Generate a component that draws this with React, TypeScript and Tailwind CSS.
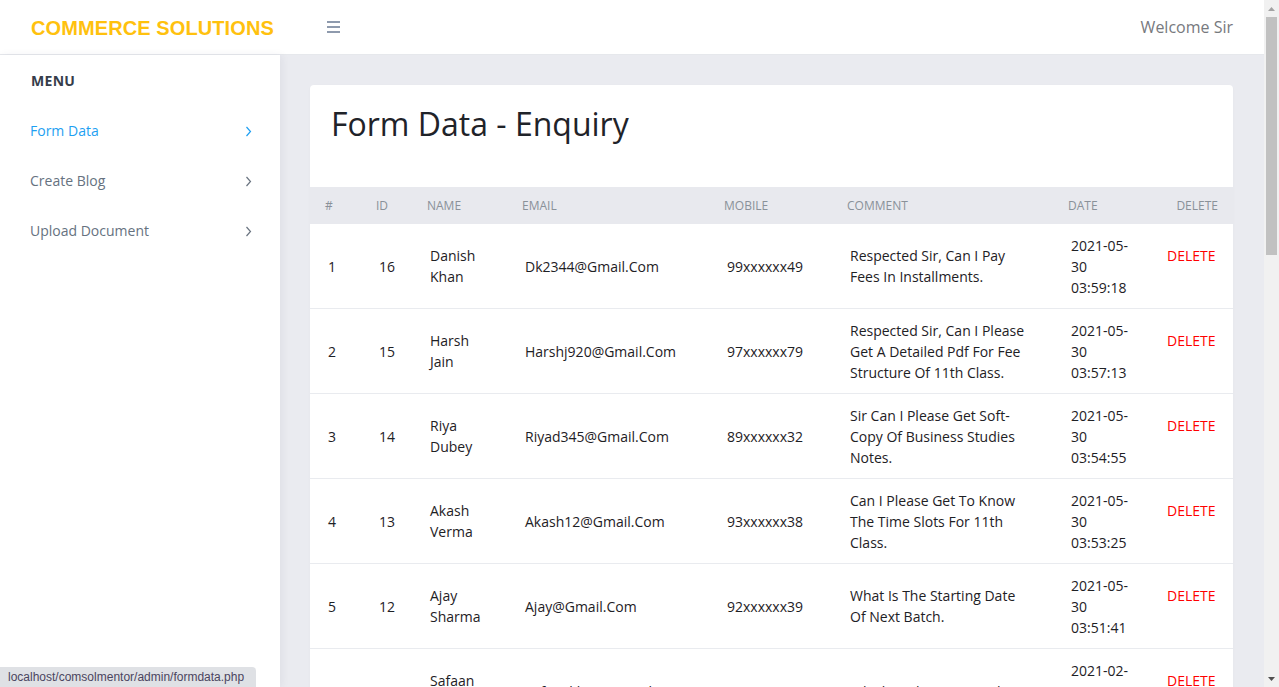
import React from "react";

type Enquiry = {
  id: number;
  name: string[];
  email: string;
  mobile: string;
  comment: string[];
  date: string[];
};

const rows: Enquiry[] = [
  {
    id: 16,
    name: ["Danish", "Khan"],
    email: "Dk2344@Gmail.Com",
    mobile: "99xxxxxx49",
    comment: ["Respected Sir, Can I Pay", "Fees In Installments."],
    date: ["2021-05-", "30", "03:59:18"],
  },
  {
    id: 15,
    name: ["Harsh", "Jain"],
    email: "Harshj920@Gmail.Com",
    mobile: "97xxxxxx79",
    comment: ["Respected Sir, Can I Please", "Get A Detailed Pdf For Fee", "Structure Of 11th Class."],
    date: ["2021-05-", "30", "03:57:13"],
  },
  {
    id: 14,
    name: ["Riya", "Dubey"],
    email: "Riyad345@Gmail.Com",
    mobile: "89xxxxxx32",
    comment: ["Sir Can I Please Get Soft-", "Copy Of Business Studies", "Notes."],
    date: ["2021-05-", "30", "03:54:55"],
  },
  {
    id: 13,
    name: ["Akash", "Verma"],
    email: "Akash12@Gmail.Com",
    mobile: "93xxxxxx38",
    comment: ["Can I Please Get To Know", "The Time Slots For 11th", "Class."],
    date: ["2021-05-", "30", "03:53:25"],
  },
  {
    id: 12,
    name: ["Ajay", "Sharma"],
    email: "Ajay@Gmail.Com",
    mobile: "92xxxxxx39",
    comment: ["What Is The Starting Date", "Of Next Batch."],
    date: ["2021-05-", "30", "03:51:41"],
  },
  {
    id: 11,
    name: ["Safaan", "Khan"],
    email: "Safaankhan@Gmail.Com",
    mobile: "98xxxxxx21",
    comment: ["Which Is The Fee Details."],
    date: ["2021-02-", "14", "11:20:36"],
  },
];

const cols = "grid grid-cols-[51px_51px_95px_202px_123px_221px_96px_1fr] pl-[6px]";

const Chevron = ({ color }: { color: string }) => (
  <svg width="7" height="11" viewBox="0 0 7 11" fill="none" stroke={color} strokeWidth="1.2">
    <polyline points="1.5,1 5.5,5.5 1.5,10" />
  </svg>
);

const Lines = ({ lines }: { lines: string[] }) => (
  <div>
    {lines.map((l, i) => (
      <div key={i}>{l}</div>
    ))}
  </div>
);

export default function App() {
  const menu = [
    { label: "Form Data", active: true },
    { label: "Create Blog", active: false },
    { label: "Upload Document", active: false },
  ];

  return (
    <div
      className="h-[687px] w-full flex overflow-hidden bg-white"
      style={{ fontFamily: '"Open Sans", sans-serif' }}
    >
      <div className="flex-1 min-w-0 flex flex-col relative">
        {/* top bar */}
        <header className="h-[55px] shrink-0 flex items-center border-b border-[#e6e8ec] bg-white">
          <div className="w-[280px] pl-[31px] pt-[1px]">
            <span
              className="text-[20px] font-bold text-[#ffc10e] tracking-[0.1px]"
              style={{ fontFamily: '"Liberation Sans", Arial, sans-serif' }}
            >
              COMMERCE SOLUTIONS
            </span>
          </div>
          <div className="flex flex-col gap-[3px] ml-[47px]">
            <span className="block w-[13px] h-[2px] bg-[#8e9aad]" />
            <span className="block w-[13px] h-[2px] bg-[#8e9aad]" />
            <span className="block w-[13px] h-[2px] bg-[#8e9aad]" />
          </div>
          <div className="ml-auto pr-[31px] text-[16px] text-[#77797e]">Welcome Sir</div>
        </header>

        <div className="flex-1 min-h-0 flex">
          {/* sidebar */}
          <aside className="w-[280px] shrink-0 bg-white shadow-[2px_0_8px_rgba(30,40,70,0.06)] z-10">
            <div className="pl-[31px] pt-[15px] h-[50px] text-[14px] font-bold text-[#363d4a] tracking-[0.3px]">
              MENU
            </div>
            {menu.map((m) => (
              <div
                key={m.label}
                className={`h-[50px] flex items-center pl-[30px] pr-[28px] text-[14px] ${
                  m.active ? "text-[#1e9ff2]" : "text-[#66727f]"
                }`}
              >
                <span className="flex-1">{m.label}</span>
                <span className="mt-[3px]">
                  <Chevron color={m.active ? "#1e9ff2" : "#6a7480"} />
                </span>
              </div>
            ))}
          </aside>

          {/* main */}
          <main className="flex-1 min-w-0 bg-[#eaebf0] pt-[30px] pl-[30px] pr-[31px]">
            <div className="bg-white rounded-[4px] shadow-[0_1px_3px_rgba(0,0,0,0.03)] overflow-hidden">
              <div className="h-[102px] pl-[21px] pt-[19px]">
                <h1 className="text-[32px] leading-[40px] text-[#1f2329]">Form Data - Enquiry</h1>
              </div>

              <div className={`${cols} h-[37px] items-center bg-[#e8e9ee] text-[12px] text-[#8a9199]`}>
                <div className="pl-[9px]">#</div>
                <div className="pl-[9px]">ID</div>
                <div className="pl-[9px]">NAME</div>
                <div className="pl-[9px]">EMAIL</div>
                <div className="pl-[9px]">MOBILE</div>
                <div className="pl-[9px]">COMMENT</div>
                <div className="pl-[9px]">DATE</div>
                <div className="text-right pr-[15px]">DELETE</div>
              </div>

              {rows.map((r, i) => (
                <div
                  key={r.id}
                  className={`${cols} h-[85px] items-center border-b border-[#e9ebef] text-[14px] leading-[21px] text-[#1e2125]`}
                >
                  <div className="pl-3">{i + 1}</div>
                  <div className="pl-3">{r.id}</div>
                  <div className="pl-3">
                    <Lines lines={r.name} />
                  </div>
                  <div className="pl-3">{r.email}</div>
                  <div className="pl-3">{r.mobile}</div>
                  <div className="pl-3">
                    <Lines lines={r.comment} />
                  </div>
                  <div className="pl-3">
                    <Lines lines={r.date} />
                  </div>
                  <div className="pl-3 pb-[21px]">
                    <a href="#" className="text-[#ff0000]">
                      DELETE
                    </a>
                  </div>
                </div>
              ))}
            </div>
          </main>
        </div>

        {/* browser status bubble */}
        <div
          className="absolute z-20 bottom-0 left-0 h-[20px] w-[256px] bg-[#dfe1e5] rounded-tr-[4px] pl-[8px] flex items-center text-[12px] text-[#4b4560]"
          style={{ fontFamily: '"Liberation Sans", Arial, sans-serif' }}
        >
          localhost/comsolmentor/admin/formdata.php
        </div>
      </div>

      {/* page scrollbar */}
      <div className="w-[15px] shrink-0 bg-[#f1f1f1] flex flex-col items-center">
        <div className="h-[17px] flex items-center justify-center">
          <svg width="7" height="4" viewBox="0 0 7 4">
            <polygon points="0,4 3.5,0 7,4" fill="#a3a3a3" />
          </svg>
        </div>
        <div className="w-[11px] h-[238px] bg-[#c1c1c1]" />
        <div className="flex-1" />
        <div className="h-[17px] flex items-center justify-center">
          <svg width="7" height="4" viewBox="0 0 7 4">
            <polygon points="0,0 3.5,4 7,0" fill="#505050" />
          </svg>
        </div>
      </div>
    </div>
  );
}
